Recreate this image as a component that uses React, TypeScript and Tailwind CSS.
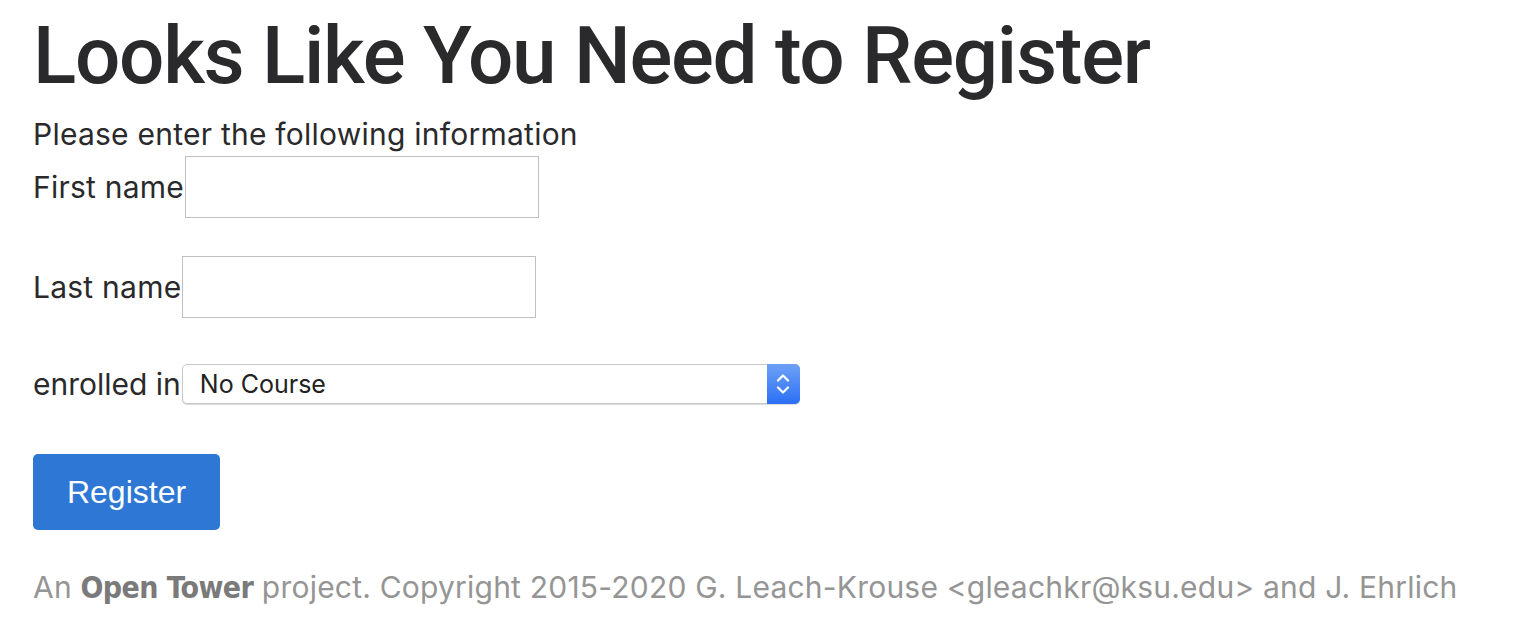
export default function App() {
  return (
    <div className="min-h-screen bg-white px-[33px] font-['Inter',sans-serif] text-[#2a2a2c]">
      <h1 className="pt-[8px] font-['Roboto',sans-serif] text-[80px] font-medium leading-[96px] tracking-[-0.016em]">
        Looks Like You Need to Register
      </h1>
      <p className="mt-[12px] text-[30px] leading-[36px] tracking-[0.008em]">Please enter the following information</p>

      <form className="mt-[4px] flex flex-col" onSubmit={(e) => e.preventDefault()}>
        <label className="flex items-center text-[30px] tracking-[0.008em]">
          First name
          <input type="text" className="ml-[1px] h-[62px] w-[354px] border border-[#c0c0c0] bg-white px-2 outline-none" />
        </label>

        <label className="mt-[38px] flex items-center text-[30px] tracking-[0.008em]">
          Last name
          <input type="text" className="ml-[1px] h-[62px] w-[354px] border border-[#c0c0c0] bg-white px-2 outline-none" />
        </label>

        <label className="mt-[46px] flex items-center text-[30px] leading-[40px]">
          enrolled in
          <div className="relative ml-[1px] flex h-[40px] w-[618px] items-center rounded-[5px] border border-[#c8c8c8] bg-white shadow-[0_1px_1px_rgba(0,0,0,0.15)]">
            <span className="pl-[17px] text-[25px] leading-none text-[#222]">No Course</span>
            <span className="absolute inset-y-[-1px] right-[-1px] flex w-[33px] flex-col items-center justify-center gap-[4px] rounded-r-[5px] bg-gradient-to-b from-[#6ea1f6] to-[#2a6ef4]">
              <svg width="14" height="9" viewBox="0 0 14 9" fill="none">
                <path d="M2 7.5L7 2.5L12 7.5" stroke="white" strokeWidth="2.2" strokeLinecap="round" strokeLinejoin="round" />
              </svg>
              <svg width="14" height="9" viewBox="0 0 14 9" fill="none">
                <path d="M2 1.5L7 6.5L12 1.5" stroke="white" strokeWidth="2.2" strokeLinecap="round" strokeLinejoin="round" />
              </svg>
            </span>
          </div>
        </label>

        <div className="mt-[50px]">
          <button type="submit" className="h-[76px] w-[187px] rounded-[5px] bg-[#2f77d4] font-['Liberation_Sans',sans-serif] text-[32px] text-white">
            Register
          </button>
        </div>
      </form>

      <p className="mt-[39px] text-[30px] leading-[36px] tracking-[0.007em] text-[#959595]">
        An <span className="font-['DejaVu_Sans_Condensed','DejaVu_Sans',sans-serif] font-bold tracking-[-0.02em] text-[#7a7a7a]">Open Tower</span> project. Copyright 2015-2020 G. Leach-Krouse &lt;gleachkr@ksu.edu&gt; and J. Ehrlich
      </p>
    </div>
  );
}
